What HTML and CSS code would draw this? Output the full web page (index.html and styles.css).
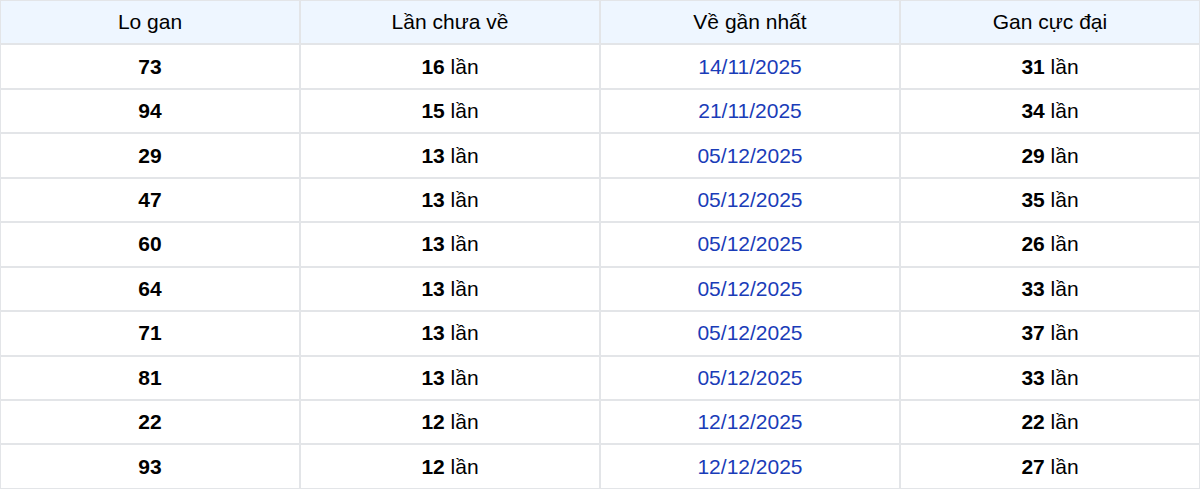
FILE: index.html
```html
<!DOCTYPE html>
<html lang="vi">
<head>
<meta charset="utf-8">
<link rel="stylesheet" href="styles.css">
</head>
<body>
<table class="gan-table">
  <thead>
    <tr><th>Lo gan</th><th>Lần chưa về</th><th>Về gần nhất</th><th>Gan cực đại</th></tr>
  </thead>
  <tbody>
    <tr><td><b>73</b></td><td><b>16</b> lần</td><td class="date">14/11/2025</td><td><b>31</b> lần</td></tr>
    <tr><td><b>94</b></td><td><b>15</b> lần</td><td class="date">21/11/2025</td><td><b>34</b> lần</td></tr>
    <tr><td><b>29</b></td><td><b>13</b> lần</td><td class="date">05/12/2025</td><td><b>29</b> lần</td></tr>
    <tr><td><b>47</b></td><td><b>13</b> lần</td><td class="date">05/12/2025</td><td><b>35</b> lần</td></tr>
    <tr><td><b>60</b></td><td><b>13</b> lần</td><td class="date">05/12/2025</td><td><b>26</b> lần</td></tr>
    <tr><td><b>64</b></td><td><b>13</b> lần</td><td class="date">05/12/2025</td><td><b>33</b> lần</td></tr>
    <tr><td><b>71</b></td><td><b>13</b> lần</td><td class="date">05/12/2025</td><td><b>37</b> lần</td></tr>
    <tr><td><b>81</b></td><td><b>13</b> lần</td><td class="date">05/12/2025</td><td><b>33</b> lần</td></tr>
    <tr><td><b>22</b></td><td><b>12</b> lần</td><td class="date">12/12/2025</td><td><b>22</b> lần</td></tr>
    <tr><td><b>93</b></td><td><b>12</b> lần</td><td class="date">12/12/2025</td><td><b>27</b> lần</td></tr>
  </tbody>
</table>
</body>
</html>
```
FILE: styles.css
```css
html, body {
  margin: 0;
  padding: 0;
  background: #fff;
}
.gan-table {
  width: 1200px;
  border-collapse: separate;
  border-spacing: 0;
  table-layout: fixed;
  font-family: "Liberation Sans", Arial, sans-serif;
  font-size: 21px;
  color: #000;
}
.gan-table th,
.gan-table td {
  border: 1px solid #e3e5e8;
  height: 42.45px;
  padding: 0;
  text-align: center;
  vertical-align: middle;
  line-height: 24px;
}
.gan-table th {
  background: #eef6ff;
  font-weight: 400;
}
.gan-table td b {
  font-weight: 700;
}
.gan-table td.date {
  color: #1a3cb8;
}
```
